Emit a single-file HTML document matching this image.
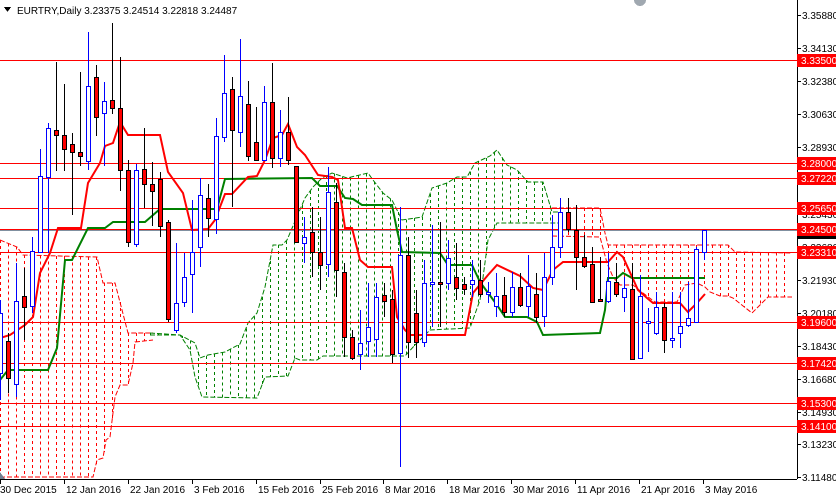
<!DOCTYPE html>
<html><head><meta charset="utf-8"><style>
html,body{margin:0;padding:0;background:#fff;}
body{width:836px;height:497px;overflow:hidden;position:relative;font-family:"Liberation Sans",sans-serif;}
svg{position:absolute;left:0;top:0;}
text{font-family:"Liberation Sans",sans-serif;font-size:10px;}
</style></head><body>
<svg id="s" width="836" height="497" viewBox="0 0 836 497" shape-rendering="crispEdges">
<g id="cloud"></g>
<g id="hl" stroke="#ff0000" stroke-width="1">
<line x1="0" y1="60.5" x2="797" y2="60.5"/>
<line x1="0" y1="163.5" x2="797" y2="163.5"/>
<line x1="0" y1="178.5" x2="797" y2="178.5"/>
<line x1="0" y1="208.5" x2="797" y2="208.5"/>
<line x1="0" y1="252.5" x2="797" y2="252.5"/>
<line x1="0" y1="322.5" x2="797" y2="322.5"/>
<line x1="0" y1="363.5" x2="797" y2="363.5"/>
<line x1="0" y1="403.5" x2="797" y2="403.5"/>
<line x1="0" y1="426.5" x2="797" y2="426.5"/>
</g>
<line x1="0" y1="229.5" x2="797" y2="229.5" stroke="#ff0000"/>
<line x1="0" y1="230.5" x2="797" y2="230.5" stroke="#8090a0"/>
<g id="lines" fill="none" stroke-width="2" shape-rendering="auto">
<polyline stroke="#008000" points="0,380 8,370 48,370 57,348 65,260 72,260 88,228 105,228 113,222 145,222 160,209 217,209 225,179 312,178 320,186 337,186 345,198 353,199 362,205 392,205 397,230 402,252 440,253 448,265 472,265 480,282 497,305 505,317 527,317 537,322 543,335 600,333 605,310 608,278 617,278 623,273 632,278 705,278"/>
<polyline stroke="#ff0000" points="0,338 10,335 25,325 33,317 40,273 50,253 58,228 81,228 88,183 100,163 105,146 113,143 120,122 128,135 160,135 168,172 183,193 192,230 208,229 215,220 225,194 232,194 248,177 257,176 265,160 273,138 282,135 288,124 297,147 305,155 318,175 332,177 338,180 345,228 352,228 360,260 368,267 392,267 397,317 405,330 410,335 465,335 473,293 488,275 497,265 520,276 533,288 543,290 553,270 563,262 608,262 617,252 623,257 638,290 647,298 653,303 680,303 688,312 697,303 705,294"/>
</g>
<g id="candles"></g>
<rect x="797" y="0" width="39" height="497" fill="#fff"/>
<line x1="797.5" y1="0" x2="797.5" y2="479" stroke="#000"/>
<line x1="0" y1="479.5" x2="797" y2="479.5" stroke="#000"/>
<g id="axis"></g>
<g fill="#000">
<text x="17" y="14">EURTRY,Daily  3.23375 3.24514 3.22818 3.24487</text>
<path d="M4,7 L11,7 L7.5,12 Z"/>
</g>
<circle cx="640" cy="0" r="6" fill="#a0a8b0"/>
<path d="M0,472 L5,479 L0,479Z" fill="#708090"/>
</svg>
<script>
var NS="http://www.w3.org/2000/svg";
function el(p,t,a,txt){var e=document.createElementNS(NS,t);for(var k in a)e.setAttribute(k,a[k]);if(txt!=null)e.textContent=txt;p.appendChild(e);return e;}
var C=[
[0,300,400,313,373,'b'],[8,333,393,341,378,'r'],[16,263,397,301,384,'b'],[24,268,340,296,307,'r'],[32,237,313,251,306,'b'],[40,149,252,176,252,'b'],[48,123,253,128,177,'b'],[56,62,171,130,135,'r'],[64,84,171,135,149,'r'],[72,133,215,144,152,'r'],[80,72,166,152,156,'r'],[88,32,170,86,161,'b'],[96,65,136,77,117,'r'],[104,82,166,101,113,'b'],[112,23,114,100,108,'r'],[120,57,191,108,170,'r'],[128,160,247,170,242,'r'],[136,164,247,170,244,'b'],[144,128,208,169,184,'r'],[152,162,226,184,191,'r'],[160,172,237,179,226,'r'],[168,220,322,222,319,'r'],[176,243,333,303,330,'b'],[184,253,307,277,302,'b'],[192,200,313,252,274,'b'],[200,178,267,195,247,'b'],[208,184,237,198,218,'r'],[216,118,234,136,219,'b'],[224,55,142,93,137,'b'],[232,77,207,89,130,'r'],[240,39,147,96,132,'b'],[248,81,161,104,156,'r'],[256,107,160,142,160,'r'],[264,86,160,102,160,'b'],[272,63,168,102,158,'r'],[280,110,167,132,158,'b'],[288,97,165,132,160,'r'],[296,166,242,166,242,'r'],[304,217,263,237,243,'b'],[312,207,277,232,252,'r'],[320,217,290,252,265,'r'],[328,167,277,192,264,'b'],[336,183,297,202,270,'r'],[344,263,357,272,337,'r'],[352,330,360,337,358,'r'],[360,310,370,343,354,'b'],[368,283,357,327,341,'b'],[376,283,357,297,339,'b'],[384,283,317,295,301,'r'],[392,290,363,299,354,'r'],[400,207,467,255,353,'b'],
[408,237,358,255,342,'r'],[416,290,358,313,342,'r'],[424,260,347,283,342,'b'],[432,225,327,282,284,'b'],[440,222,327,282,284,'r'],[448,240,290,258,283,'b'],[456,243,300,277,288,'r'],[464,277,295,284,289,'r'],[472,260,297,280,284,'b'],[480,260,297,280,294,'r'],[488,282,303,292,294,'b'],[496,273,317,296,306,'b'],[504,277,317,295,312,'r'],[512,272,317,287,312,'b'],[520,273,307,287,305,'r'],[528,255,317,286,306,'b'],[536,273,323,294,317,'r'],[544,253,327,277,316,'b'],[552,215,285,247,277,'b'],[560,198,258,212,247,'b'],[568,198,232,212,229,'r'],[576,205,290,230,257,'r'],[584,235,268,257,266,'r'],[592,247,303,264,302,'r'],[600,257,302,299,301,'r'],[608,253,303,281,301,'b'],[616,263,297,282,294,'r'],[624,277,312,288,297,'b'],[632,263,359,289,359,'r'],[640,275,358,296,358,'b'],[648,308,352,321,323,'b'],[656,292,335,307,333,'b'],[664,303,353,307,340,'r'],[672,292,348,338,340,'b'],[680,292,348,326,333,'b'],[688,282,327,318,325,'b'],[696,247,323,249,322,'b'],[704,230,260,230,252,'b']];
var cg=document.getElementById('candles');
C.forEach(function(c){var x=c[0]+0.5,bl=c[5]=='b';
el(cg,'line',{x1:x,y1:c[1],x2:x,y2:c[2],stroke:bl?'#0000ff':'#000'});
var h=Math.max(1,c[4]-c[3]);
el(cg,'rect',{x:c[0]-2+0.5,y:c[3]+0.5,width:4,height:h,fill:bl?'#fff':'#ff0000',stroke:bl?'#0000ff':'#000'});});
function interp(P,x){for(var i=0;i<P.length-1;i++){if(x>=P[i][0]&&x<=P[i+1][0]){var t=(x-P[i][0])/((P[i+1][0]-P[i][0])||1);return P[i][1]+t*(P[i+1][1]-P[i][1]);}}return null;}
var clouds=[
{col:'#ff0000',x0:0,x1:148,top:[[0,240],[17,247],[23,255],[97,257],[103,283],[115,283],[128,333],[153,333]],bot:[[0,477],[93,477],[97,460],[103,458],[106,440],[110,437],[115,397],[120,385],[128,385],[133,363],[135,342],[153,340]]},
{col:'#008000',x0:150,x1:556,top:[[150,333],[180,335],[195,343],[200,358],[208,355],[225,352],[240,344],[248,323],[257,313],[265,287],[273,245],[282,245],[287,240],[305,198],[313,187],[322,178],[332,173],[347,178],[368,173],[373,180],[383,193],[392,200],[402,220],[422,217],[432,188],[447,183],[457,177],[467,177],[475,163],[490,156],[497,150],[507,165],[517,170],[528,182],[543,182],[552,212],[560,212]],bot:[[150,335],[180,335],[190,350],[195,377],[202,397],[257,398],[265,377],[288,376],[295,358],[300,360],[317,360],[323,356],[405,356],[415,345],[430,330],[470,328],[480,300],[488,240],[497,223],[552,223],[560,223]]},
{col:'#ff0000',x0:560,x1:790,top:[[552,208],[600,208],[605,233],[608,245],[728,245],[735,252],[792,253]],bot:[[552,236],[600,237],[607,263],[613,277],[620,285],[633,285],[643,293],[655,302],[677,302],[685,285],[697,283],[705,287],[710,292],[720,296],[728,296],[733,298],[752,313],[758,307],[768,297],[792,297]]}];
var cl=document.getElementById('cloud');
clouds.forEach(function(c){
for(var x=c.x0;x<=c.x1;x+=8){var t=interp(c.top,x),b=interp(c.bot,x);if(t==null||b==null)continue;
el(cl,'line',{x1:x+0.5,y1:t,x2:x+0.5,y2:b,stroke:c.col,'stroke-dasharray':'3,3'});}
var pt=function(P){return P.map(function(p){return p.join(',')}).join(' ')};
el(cl,'polyline',{points:pt(c.top),fill:'none',stroke:c.col,'stroke-dasharray':'5,2','shape-rendering':'auto'});
el(cl,'polyline',{points:pt(c.bot),fill:'none',stroke:c.col,'stroke-dasharray':'5,2','shape-rendering':'auto'});
});
var ax=document.getElementById('axis');
[[15,'3.35880'],[48,'3.34130'],[81,'3.32380'],[114,'3.30630'],[147,'3.28930'],[214,'3.25430'],[247,'3.23680'],[280,'3.21930'],[313,'3.20180'],[346,'3.18430'],[379,'3.16680'],[412,'3.14930'],[444,'3.13230'],[477,'3.11480']].forEach(function(t){
el(ax,'line',{x1:797,y1:t[0]+0.5,x2:801,y2:t[0]+0.5,stroke:'#000'});
el(ax,'text',{x:802,y:t[0]+4,fill:'#000'},t[1]);});
[[60,'3.33500'],[163,'3.28000'],[178,'3.27220'],[208,'3.25650'],[229,'3.24500'],[252,'3.23310'],[322,'3.19600'],[363,'3.17420'],[403,'3.15300'],[426,'3.14100']].forEach(function(t){
el(ax,'rect',{x:797,y:t[0]-6,width:39,height:13,fill:'#ff0000'});
el(ax,'text',{x:801,y:t[0]+4,fill:'#fff'},t[1]);});
el(ax,'rect',{x:797,y:236,width:39,height:3,fill:'#000'});
[[0,'30 Dec 2015'],[64,'12 Jan 2016'],[128,'22 Jan 2016'],[192,'3 Feb 2016'],[256,'15 Feb 2016'],[320,'25 Feb 2016'],[383,'8 Mar 2016'],[447,'18 Mar 2016'],[511,'30 Mar 2016'],[575,'11 Apr 2016'],[639,'21 Apr 2016'],[703,'3 May 2016']].forEach(function(t){
el(ax,'line',{x1:t[0]+0.5,y1:479,x2:t[0]+0.5,y2:484,stroke:'#000'});
el(ax,'text',{x:t[0]+(t[0]?2:0),y:493,fill:'#000'},t[1]);});
</script>
</body></html>
